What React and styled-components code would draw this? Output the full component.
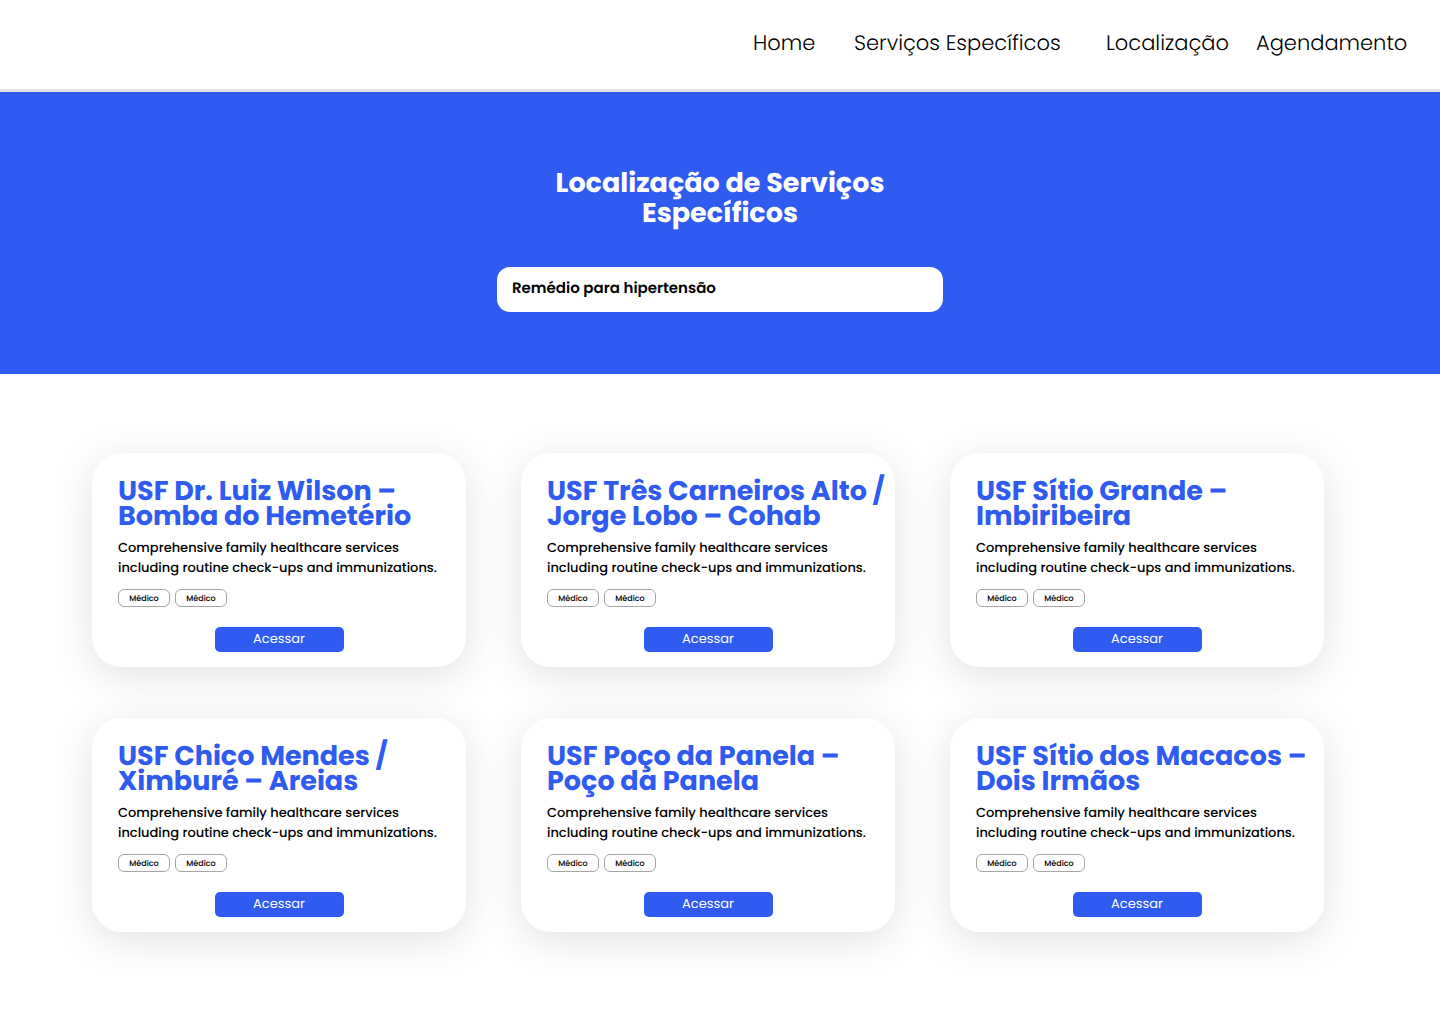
import React from "react";
import styled, { createGlobalStyle } from "styled-components";

const BLUE = "#2f5bf0";

const GlobalStyle = createGlobalStyle`
  *, *::before, *::after { box-sizing: border-box; }
  body {
    margin: 0;
    background: #fff;
    color: #000;
    font-family: Poppins, Inter, "Open Sans", sans-serif;
    text-rendering: geometricPrecision;
  }
  h1, h2, p, ul { margin: 0; padding: 0; }
  button, input { font-family: inherit; text-rendering: inherit; }
`;

const Header = styled.header`
  display: flex;
  justify-content: flex-end;
  align-items: center;
  height: 92px;
  padding: 0 32px 2px 0;
  border-bottom: 3px solid #e3e4e6;
`;

const Nav = styled.nav`
  display: grid;
  grid-template-columns: 101px 252px 150px 152px;
`;

const NavLink = styled.a`
  color: #000;
  font-size: 21px;
  font-weight: 300;
  line-height: 30px;
  text-decoration: none;
  white-space: nowrap;
`;

const Hero = styled.section`
  display: flex;
  flex-direction: column;
  align-items: center;
  gap: 38px;
  padding: 77px 24px 62px;
  background: ${BLUE};
`;

const HeroTitle = styled.h1`
  max-width: 360px;
  color: #fff;
  font-size: 27px;
  font-weight: 700;
  line-height: 30px;
  text-align: center;
`;

const SearchInput = styled.input`
  width: 446px;
  max-width: 100%;
  height: 45px;
  padding: 0 15px 2px;
  border: 0;
  border-radius: 13px;
  background: #fff;
  color: #000;
  font-size: 15px;
  font-weight: 600;
`;

const Units = styled.main`
  display: grid;
  grid-template-columns: repeat(3, minmax(0, 1fr));
  gap: 51px 55px;
  padding: 79px 116px 92px 92px;
`;

const Card = styled.article`
  display: flex;
  flex-direction: column;
  padding: 26px 0 15px 26px;
  border-radius: 30px;
  background: #fff;
  box-shadow: 0 8px 40px rgba(0, 0, 0, 0.12);
`;

const CardTitle = styled.h2`
  color: ${BLUE};
  font-size: 27px;
  font-weight: 700;
  line-height: 25px;
  white-space: nowrap;
`;

const TitleLine = styled.span`
  display: block;
`;

const Description = styled.p`
  margin-top: 9px;
  max-width: 330px;
  font-size: 13px;
  font-weight: 500;
  line-height: 20px;
`;

const Tags = styled.ul`
  display: flex;
  gap: 5px;
  margin-top: 11px;
  list-style: none;
`;

const Tag = styled.li`
  width: 52px;
  height: 18px;
  border: 1px solid #a6a6a6;
  border-radius: 6px;
  font-size: 8px;
  font-weight: 500;
  line-height: 17px;
  text-align: center;
`;

const AccessButton = styled.button`
  align-self: center;
  width: 129px;
  height: 25px;
  margin: 20px 26px 0 0;
  padding: 0 0 2px;
  border: 0;
  border-radius: 5px;
  background: ${BLUE};
  color: #fff;
  font-size: 13px;
  font-weight: 400;
  line-height: 23px;
  cursor: pointer;
`;

const links = ["Home", "Serviços Específicos", "Localização", "Agendamento"];

const units = [
  ["USF Dr. Luiz Wilson –", "Bomba do Hemetério"],
  ["USF Três Carneiros Alto /", "Jorge Lobo – Cohab"],
  ["USF Sítio Grande –", "Imbiribeira"],
  ["USF Chico Mendes /", "Ximburé – Areias"],
  ["USF Poço da Panela –", "Poço da Panela"],
  ["USF Sítio dos Macacos –", "Dois Irmãos"],
];

function UnitCard({ title }) {
  return (
    <Card>
      <CardTitle>
        {title.map((line) => (
          <TitleLine key={line}>{line}</TitleLine>
        ))}
      </CardTitle>
      <Description>
        Comprehensive family healthcare services including routine check-ups and immunizations.
      </Description>
      <Tags>
        <Tag>Médico</Tag>
        <Tag>Médico</Tag>
      </Tags>
      <AccessButton type="button">Acessar</AccessButton>
    </Card>
  );
}

export default function App() {
  return (
    <>
      <GlobalStyle />
      <Header>
        <Nav>
          {links.map((label) => (
            <NavLink key={label} href="#">{label}</NavLink>
          ))}
        </Nav>
      </Header>
      <Hero>
        <HeroTitle>Localização de Serviços Específicos</HeroTitle>
        <SearchInput type="text" aria-label="Buscar serviço" defaultValue="Remédio para hipertensão" />
      </Hero>
      <Units>
        {units.map((title) => (
          <UnitCard key={title[0]} title={title} />
        ))}
      </Units>
    </>
  );
}
